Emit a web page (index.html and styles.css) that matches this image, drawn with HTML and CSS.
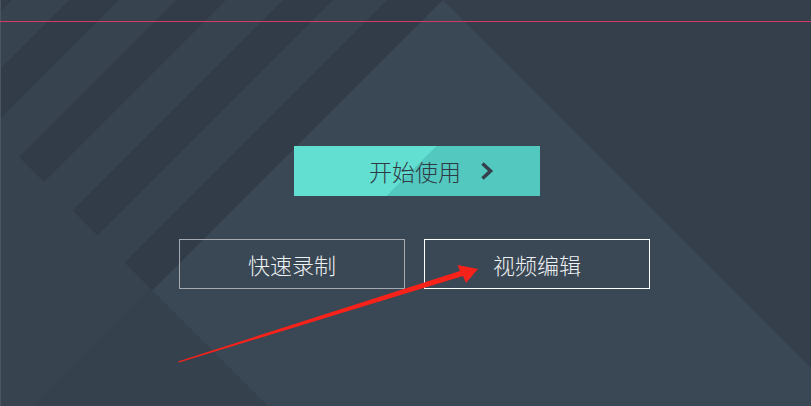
FILE: index.html
```html
<!DOCTYPE html>
<html lang="zh-CN">
<head>
<meta charset="utf-8">
<title>开始使用</title>
<link rel="stylesheet" href="styles.css">
</head>
<body>
<div class="stage">
  <svg class="bg" width="811" height="406" viewBox="0 0 811 406" aria-hidden="true">
    <rect x="0" y="0" width="811" height="406" fill="#37434f"/>
    <!-- dark diagonal stripes, ending on the line y = x + 138 -->
    <polygon fill="#323c48" points="12,-50 62,-50 -63,75 -88,50"/>
    <polygon fill="#323c48" points="119,-50 169,-50 -9.5,128.5 -34.5,103.5"/>
    <polygon fill="#323c48" points="226,-50 276,-50 44,182 19,157"/>
    <polygon fill="#323c48" points="333,-50 383,-50 97.5,235.5 72.5,210.5"/>
    <polygon fill="#323c48" points="437,-50 493,-50 152.5,290.5 124.5,262.5"/>
    <!-- large lighter triangle -->
    <polygon fill="#3a4754" points="443,0 943,500 -57,500"/>
    <!-- darker area right of the triangle -->
    <polygon fill="#343f4b" points="443,0 900,0 900,457"/>
    <!-- lower darker wedge -->
    <polygon fill="#36414e" points="150.5,288.5 350.5,488.5 -49.5,488.5"/>
    <rect x="0" y="0" width="1" height="406" fill="#4b5560"/>
  </svg>

  <div class="content">
    <div class="topbar"></div>
    <a class="start-btn" href="#">
      <span class="start-label">开始使用</span>
      <svg class="chev" width="16" height="20" viewBox="0 0 16 20" aria-hidden="true">
        <polyline points="3.5,2.5 11.5,10 3.5,17.5" fill="none" stroke="#35404c" stroke-width="3.6" stroke-linejoin="miter"/>
      </svg>
    </a>
    <div class="actions">
      <a class="action action-record" href="#">快速录制</a>
      <a class="action action-edit" href="#">视频编辑</a>
    </div>
  </div>

  <svg class="annot" width="811" height="406" viewBox="0 0 811 406" aria-hidden="true">
    <polygon fill="#f7231a" points="178,361.5 460,271 457.5,265 478,269 466,283 463,276 179,362.5"/>
  </svg>
</div>
</body>
</html>
```

FILE: styles.css
```css
html, body {
  margin: 0;
  padding: 0;
  background: #37434f;
}

body {
  font-family: "Noto Sans CJK SC", "Noto Sans", "Liberation Sans", sans-serif;
}

.stage {
  display: grid;
  width: 811px;
  height: 406px;
  overflow: hidden;
}

.stage > * {
  grid-area: 1 / 1;
}

.bg {
  display: block;
}

.annot {
  display: block;
  pointer-events: none;
}

.content {
  display: flex;
  flex-direction: column;
  align-items: flex-start;
}

.topbar {
  align-self: stretch;
  height: 21px;
  border-bottom: 1px solid #d23b63;
}

.start-btn {
  margin: 124px 0 0 294px;
  width: 246px;
  height: 50px;
  box-sizing: border-box;
  padding-left: 75px;
  display: flex;
  align-items: center;
  background: linear-gradient(135deg, #62dfd0 48.3%, #53c8bf 48.3%);
  color: #2f3a45;
  font-size: 23px;
  font-weight: 300;
  line-height: 1;
  text-decoration: none;
}

.start-label {
  display: block;
}

.chev {
  display: block;
  margin-left: 18px;
}

.actions {
  display: flex;
  gap: 19px;
  margin: 43px 0 0 179px;
}

.action {
  width: 226px;
  height: 50px;
  box-sizing: border-box;
  border: 1px solid #a6aab0;
  display: flex;
  align-items: center;
  justify-content: center;
  color: #eef1f3;
  font-size: 22px;
  font-weight: 300;
  line-height: 1;
  text-decoration: none;
}

.action-edit {
  border-color: #ffffff;
}
```
